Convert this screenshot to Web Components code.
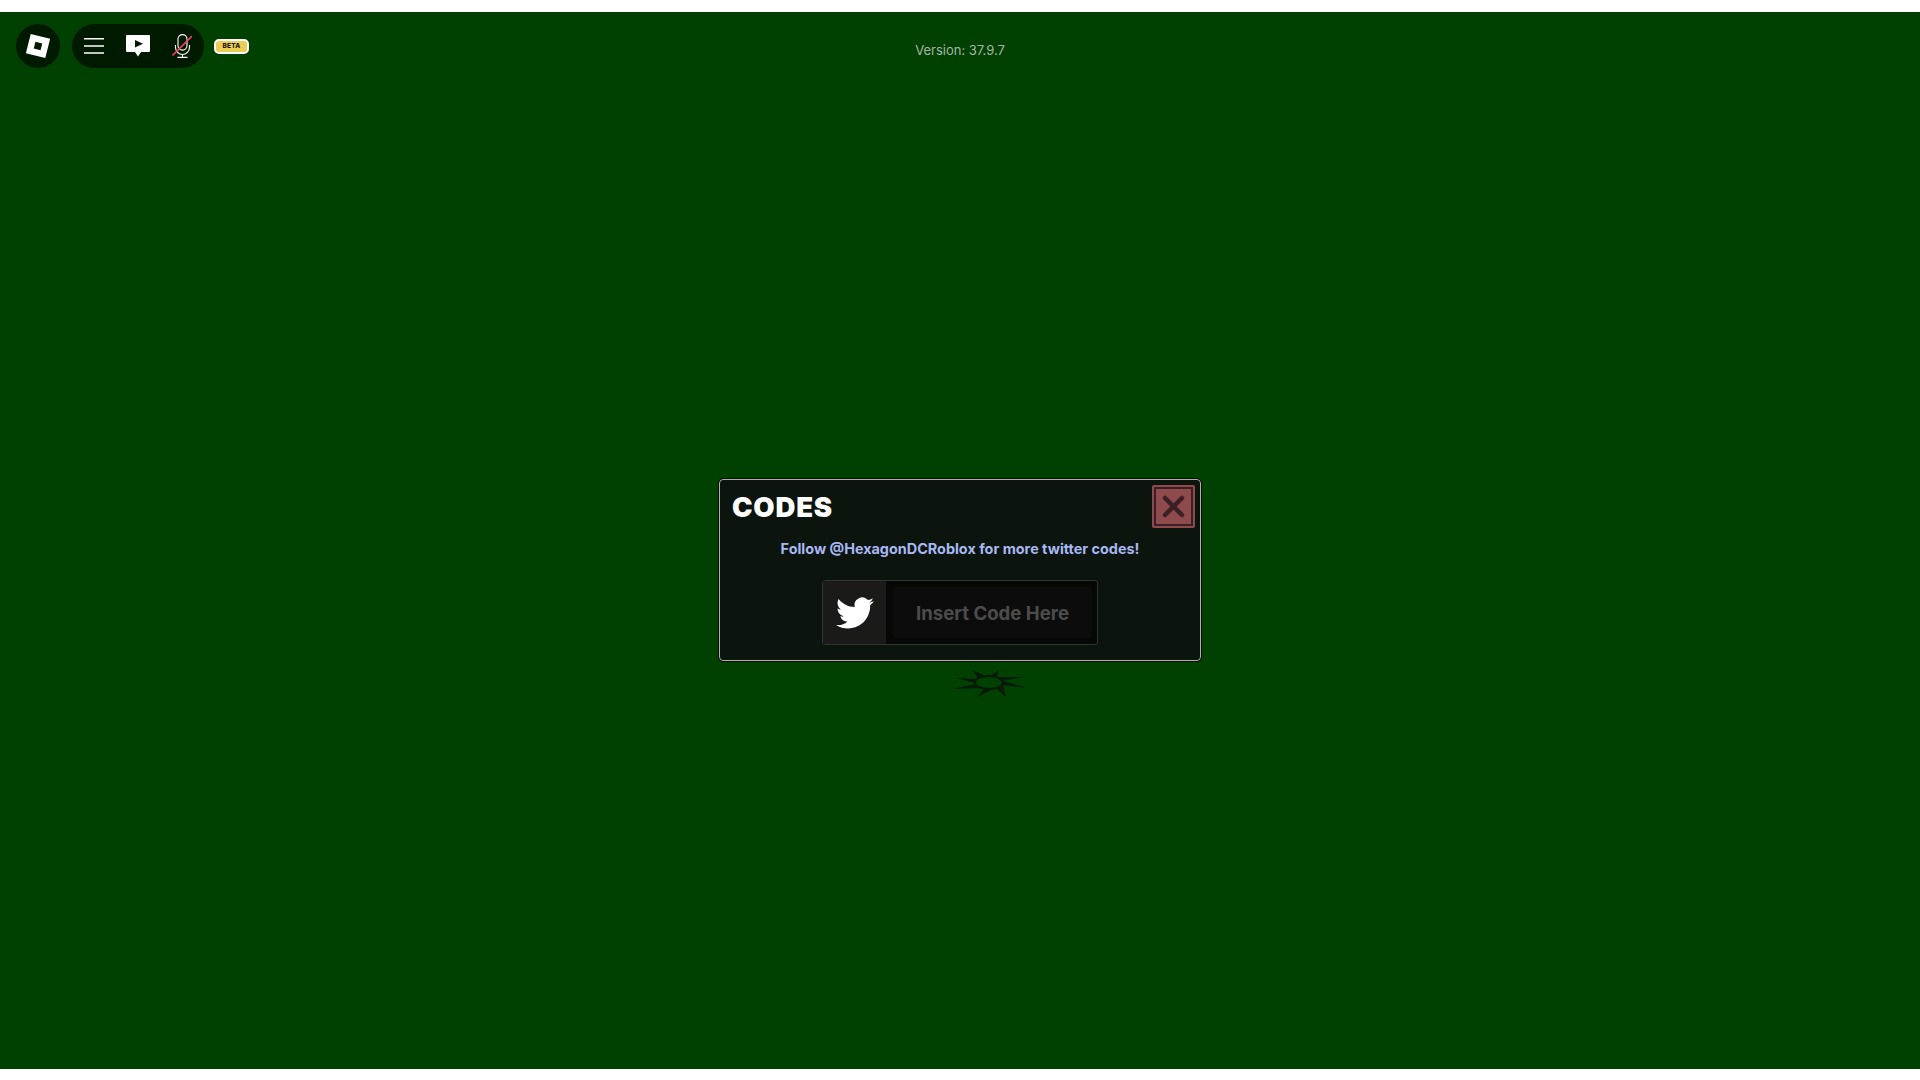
<!DOCTYPE html>
<html><head><meta charset="utf-8">
<style>
html,body{margin:0;padding:0;height:100%;background:#fff;overflow:hidden}
body{display:flex;flex-direction:column;padding:12px 0 11px;box-sizing:border-box;height:1080px;font-family:Inter,"Liberation Sans",sans-serif}
</style></head><body>
<game-stage>
  <top-bar slot="top"></top-bar>
  <codes-modal slot="modal"></codes-modal>
</game-stage>
<script>
function el(name,css,html){customElements.define(name,class extends HTMLElement{constructor(){super();this.attachShadow({mode:'open'}).innerHTML='<style>'+css+'</style>'+html}})}
el('game-stage',`:host{display:block;flex:1;background:#004000;position:relative}
.wrap{display:flex;flex-direction:column;height:100%}
.modal{display:flex;justify-content:center;margin-top:411px}`,
`<div class="wrap"><slot name="top"></slot><div class="modal"><slot name="modal"></slot></div></div>`);
el('top-bar',`:host{display:flex;align-items:center;height:44px;padding:12px 0 0 16px;position:relative}
.round{width:44px;height:44px;border-radius:50%;background:#001a00;display:flex;align-items:center;justify-content:center}
.pill{margin-left:12px;width:132px;height:44px;border-radius:22px;background:#001a00;display:flex;align-items:center;padding:0 12px;box-sizing:border-box;justify-content:space-between}
.pill svg{display:block}
.beta{margin-left:10px;width:35px;height:15px;box-sizing:border-box;border:2px solid #fff;border-radius:5px;background:#eccd55;color:#1b1a08;font:800 6.5px Inter,sans-serif;display:flex;align-items:center;justify-content:center;letter-spacing:.2px}
.ver{position:absolute;left:0;right:0;top:29px;text-align:center;font:400 13px/18px Inter,"Liberation Sans",sans-serif;color:#a6b6a6}`,
`<div class="round"><svg width="28" height="28" viewBox="0 0 28 28"><g transform="rotate(14 14 14)"><path fill="#fff" fill-rule="evenodd" d="M4 4h20v20h-20zM10.500 10.500v7h7v-7z"/></g></svg></div>
<div class="pill">
<svg width="20" height="18" viewBox="0 0 20 18"><path stroke="#fff" stroke-width="1.500" d="M0 1.750h20M0 9h20M0 16h20"/></svg>
<svg width="24" height="22" viewBox="0 0 24 22"><path fill="#fff" d="M1 0h22a1 1 0 0 1 1 1v15a1 1 0 0 1-1 1h-8l-3 4.500-3-4.500H1a1 1 0 0 1-1-1V1a1 1 0 0 1 1-1z"/><path fill="#001a00" d="M9 5l8 3.800-8 3.800z"/></svg>
<svg width="20" height="24" viewBox="0 0 20 24"><g fill="none" stroke="#fff" stroke-width="1.100"><rect x="6" y=".6" width="9" height="15.500" rx="4.500"/><path d="M3.500 11v2.500a7 7 0 0 0 14 0V11M10.500 20.500v2.800M5.500 23.400h10"/></g><path stroke="#f0405a" stroke-width="1.600" d="M.5 21.500L20 2"/></svg>
</div>
<div class="beta">BETA</div>
<div class="ver">Version: 37.9.7</div>`);
el('codes-modal',`:host{display:block;position:relative;width:482px;height:182px;box-sizing:border-box;background:#0b140d;border:1px solid #b0b0b0;outline:1px solid #081008;border-radius:4px;padding:0 12px;color:#fff}
.head{display:flex;justify-content:space-between;align-items:flex-start;height:60px}
h1{margin:0;padding-top:9px;font:900 27.5px/36px Inter,"Liberation Sans",sans-serif;letter-spacing:.8px}
.x{box-sizing:border-box;width:43px;height:43px;margin:5px -7px 0 0;padding:2px;background:#8f4a4c;border-radius:2px;display:flex}
.in{flex:1;border:2px solid #3a2024;display:flex;align-items:center;justify-content:center}
p{margin:0;text-align:center;font:700 14.4px/18px Inter,"Liberation Sans",sans-serif;color:#a9b8f3}
.entry{box-sizing:border-box;width:276px;height:65px;margin:22px auto 0;border:1px solid #2f352f;border-radius:3px;background:#060806;display:flex;overflow:hidden}
.ic{width:63px;background:#1a1b19;display:flex;align-items:center;justify-content:center}
.field{flex:1;margin:6px 5px 6px 7px;background:#0c0c0c;border-radius:3px;display:flex;align-items:center;justify-content:center;font:700 18.6px Inter,"Liberation Sans",sans-serif;color:#4c4c4c}
.spin{position:absolute;left:229px;top:185px;filter:blur(.7px)}`,
`<div class="head"><h1>CODES</h1><div class="x"><div class="in"><svg width="25" height="25" viewBox="0 0 25 25"><path stroke="#3a2024" stroke-width="4.500" stroke-linecap="round" d="M4 4l17 17M21 4L4 21"/></svg></div></div></div>
<p>Follow @HexagonDCRoblox for more twitter codes!</p>
<div class="entry"><div class="ic"><svg width="38" height="38" viewBox="0 0 24 24"><path fill="#fff" d="M23.950 4.570a10 10 0 0 1-2.820.770 4.960 4.960 0 0 0 2.160-2.720c-.950.550-2.010.950-3.120 1.180a4.920 4.920 0 0 0-8.380 4.480C7.690 8.090 4.070 6.130 1.640 3.160a4.820 4.820 0 0 0-.660 2.470c0 1.710.870 3.210 2.190 4.100a4.900 4.900 0 0 1-2.230-.620v.060a4.920 4.920 0 0 0 3.950 4.830 5 5 0 0 1-2.210.080 4.940 4.940 0 0 0 4.600 3.420A9.870 9.870 0 0 1 0 19.540a14 14 0 0 0 7.560 2.210c9.050 0 14-7.500 14-13.980 0-.210 0-.420-.020-.630a9.940 9.940 0 0 0 2.410-2.570z"/></svg></div><div class="field">Insert Code Here</div></div>
<svg class="spin" width="80" height="36" viewBox="0 0 80 36"><path fill="#081a08" d="M23 5L35 10 29 13zM50 5L41 11 47 13zM75 12L47 12 52 16zM78 23L52 15 53 20zM57 32L54 20 47 23zM28 32L44 24 36 23zM3 24L32 23 27 19zM7 13L26 18 29 14z"/><ellipse cx="40" cy="17.500" rx="14" ry="6.500" fill="none" stroke="#081a08" stroke-width="1.800"/></svg>`);
</script>
</body></html>
